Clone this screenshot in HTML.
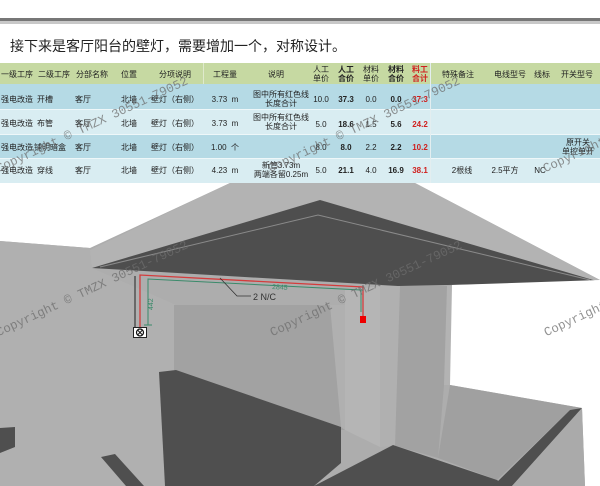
<!DOCTYPE html>
<html><head><meta charset="utf-8"><style>
*{margin:0;padding:0;box-sizing:border-box}
body{width:600px;height:486px;overflow:hidden;background:#fff;position:relative;font-family:"Liberation Sans","Noto Sans CJK SC",sans-serif}
.t{position:absolute;font-size:8px;color:#222;text-align:center;white-space:nowrap;line-height:9px;transform:translateX(-50%)}
.b{font-weight:bold}
.r{color:#d0201e;font-weight:bold}
.wm{position:absolute;font-family:"Liberation Mono",monospace;font-size:12.5px;color:rgba(110,110,110,.75);white-space:nowrap;transform-origin:0 100%;transform:rotate(-25deg)}
</style></head><body>
<div style="position:absolute;left:0;top:18px;width:600px;height:3px;background:#777"></div>
<div style="position:absolute;left:0;top:21px;width:600px;height:3px;background:#c8c8c8"></div>
<div style="position:absolute;left:10px;top:36px;font-size:14px;color:#222;white-space:nowrap">接下来是客厅阳台的壁灯，需要增加一个，对称设计。</div>

<svg style="position:absolute;left:0;top:0" width="600" height="486">
<rect x="0" y="183" width="600" height="303" fill="#adadad"/>
<polygon points="0,183 230,183 90,248 0,241" fill="#fff"/>
<polygon points="415,183 600,183 600,280" fill="#fff"/>
<polygon points="0,241 90,248 92,268 176,305 176,486 0,486" fill="#b0b0b0"/>
<polygon points="90,250 230,183 415,183 600,280 600,284 320,200 92,268" fill="#b3b3b3"/>
<polygon points="92,268 320,200 600,282 398,286" fill="#4e4e4e"/>
<polyline points="100,267 318,215 590,280" fill="none" stroke="#8a8a8a" stroke-width="1"/>
<polygon points="380,286 452,286 444,385 438,458 393,445 345,430 345,290" fill="#a2a2a2"/>
<polygon points="380,286 400,286 395,446 380,447" fill="#b0b0b0"/>
<polygon points="447,286 452,286 450,385 444,385" fill="#b3b3b3"/>
<polygon points="452,285 600,280 600,486 585,486 582,408 450,385" fill="#fff"/>
<polygon points="174,305 345,305 345,430 174,430" fill="#a2a2a2"/>
<polygon points="330,305 345,305 345,430 341,427" fill="#b0b0b0"/>
<polygon points="345,290 380,286 380,447 345,430" fill="#b5b5b5"/>
<polygon points="159,372 176,370 341,427 341,463 314,486 165,486" fill="#4f4f4f"/>
<polygon points="450,385 582,408 570,410 497,480 438,458" fill="#a0a0a0"/>
<polygon points="314,486 393,445 497,480 505,486" fill="#4f4f4f"/>
<polygon points="570,410 582,408 512,486 493,486" fill="#4f4f4f"/>
<polygon points="582,408 585,486 512,486" fill="#aaaaaa"/>
<polygon points="0,428 15,427 15,447 0,453" fill="#4f4f4f"/>
<polygon points="101,457 115,454 144,486 126,486" fill="#4f4f4f"/>
<line x1="135" y1="276" x2="135" y2="327" stroke="#222" stroke-width="1"/>
<polyline points="140,327 140,275 363,287 363,318" fill="none" stroke="#d43c3c" stroke-width="1.3"/>
<polyline points="148,325 148,279 361,290 361,312" fill="none" stroke="#3a8a6a" stroke-width="1"/>
<line x1="144" y1="325" x2="152" y2="325" stroke="#3a8a6a"/>
<rect x="360" y="316" width="6" height="7" fill="#e00"/>
<rect x="133.5" y="327.5" width="13" height="10" fill="#fff" stroke="#222"/>
<circle cx="140" cy="332.5" r="3.5" fill="none" stroke="#111" stroke-width="1.2"/>
<line x1="137.5" y1="330" x2="142.5" y2="335" stroke="#111"/>
<line x1="142.5" y1="330" x2="137.5" y2="335" stroke="#111"/>
<polyline points="220,278 237,296 251,296" fill="none" stroke="#333" stroke-width="0.8"/>
<text x="253" y="300" font-family="Liberation Sans" font-size="9" fill="#333">2 N/C</text>
<text x="272" y="289" font-family="Liberation Sans" font-size="7" fill="#3a8a6a" transform="rotate(3 272 289)">2845</text>
<text x="153" y="310" font-family="Liberation Sans" font-size="7" fill="#3a8a6a" transform="rotate(-90 153 310)">442</text>
</svg>

<div style="position:absolute;left:0;top:63px;width:600px;height:21px;background:#c6d9a2"></div>
<div style="position:absolute;left:0;top:84px;width:600px;height:25px;background:#b5dae5"></div>
<div style="position:absolute;left:0;top:109px;width:600px;height:25px;background:#d9edf2;border-top:1px solid #eef7f9"></div>
<div style="position:absolute;left:0;top:134px;width:600px;height:24px;background:#b5dae5;border-top:1px solid #eef7f9"></div>
<div style="position:absolute;left:0;top:158px;width:600px;height:25px;background:#d9edf2;border-top:1px solid #eef7f9"></div>
<div style="position:absolute;left:203px;top:63px;width:1px;height:21px;background:#dfe9cc"></div>
<div style="position:absolute;left:430px;top:63px;width:1px;height:120px;background:#e3eef0"></div>

<div class="t" style="left:17px;top:70px">一级工序</div><div class="t" style="left:54px;top:70px">二级工序</div><div class="t" style="left:92px;top:70px">分部名称</div><div class="t" style="left:129px;top:70px">位置</div><div class="t" style="left:175px;top:70px">分项说明</div><div class="t" style="left:225px;top:70px">工程量</div><div class="t" style="left:276px;top:70px">说明</div>
<div class="t" style="left:321px;top:65px">人工<br>单价</div><div class="t b" style="left:346px;top:65px">人工<br>合价</div><div class="t" style="left:371px;top:65px">材料<br>单价</div><div class="t b" style="left:396px;top:65px">材料<br>合价</div><div class="t r" style="left:420px;top:65px">料工<br>合计</div>
<div class="t" style="left:458px;top:70px">特殊备注</div><div class="t" style="left:510px;top:70px">电线型号</div><div class="t" style="left:542px;top:70px">线标</div><div class="t" style="left:577px;top:70px">开关型号</div>

<div class="t" style="left:17px;top:95px">强电改造</div><div class="t" style="left:45px;top:95px">开槽</div><div class="t" style="left:83px;top:95px">客厅</div><div class="t" style="left:129px;top:95px">北墙</div><div class="t" style="left:175px;top:95px">壁灯（右侧）</div><div class="t" style="left:225px;top:95px">3.73 &nbsp;m</div><div class="t" style="left:281px;top:90px">图中所有红色线<br>长度合计</div><div class="t" style="left:321px;top:95px">10.0</div><div class="t b" style="left:346px;top:95px">37.3</div><div class="t" style="left:371px;top:95px">0.0</div><div class="t b" style="left:396px;top:95px">0.0</div><div class="t r" style="left:420px;top:95px">37.3</div>

<div class="t" style="left:17px;top:119px">强电改造</div><div class="t" style="left:45px;top:119px">布管</div><div class="t" style="left:83px;top:119px">客厅</div><div class="t" style="left:129px;top:119px">北墙</div><div class="t" style="left:175px;top:119px">壁灯（右侧）</div><div class="t" style="left:225px;top:119px">3.73 &nbsp;m</div><div class="t" style="left:281px;top:113px">图中所有红色线<br>长度合计</div><div class="t" style="left:321px;top:120px">5.0</div><div class="t b" style="left:346px;top:120px">18.6</div><div class="t" style="left:371px;top:120px">1.5</div><div class="t b" style="left:396px;top:120px">5.6</div><div class="t r" style="left:420px;top:120px">24.2</div>

<div class="t" style="left:17px;top:143px">强电改造</div><div class="t" style="left:50px;top:143px">铺明暗盒</div><div class="t" style="left:83px;top:143px">客厅</div><div class="t" style="left:129px;top:143px">北墙</div><div class="t" style="left:175px;top:143px">壁灯（右侧）</div><div class="t" style="left:225px;top:143px">1.00 &nbsp;个</div><div class="t" style="left:321px;top:143px">8.0</div><div class="t b" style="left:346px;top:143px">8.0</div><div class="t" style="left:371px;top:143px">2.2</div><div class="t b" style="left:396px;top:143px">2.2</div><div class="t r" style="left:420px;top:143px">10.2</div><div class="t" style="left:578px;top:138px">原开关<br>单控单开</div>

<div class="t" style="left:17px;top:166px">强电改造</div><div class="t" style="left:45px;top:166px">穿线</div><div class="t" style="left:83px;top:166px">客厅</div><div class="t" style="left:129px;top:166px">北墙</div><div class="t" style="left:175px;top:166px">壁灯（右侧）</div><div class="t" style="left:225px;top:166px">4.23 &nbsp;m</div><div class="t" style="left:281px;top:161px">新管3.73m<br>两端各留0.25m</div><div class="t" style="left:321px;top:166px">5.0</div><div class="t b" style="left:346px;top:166px">21.1</div><div class="t" style="left:371px;top:166px">4.0</div><div class="t b" style="left:396px;top:166px">16.9</div><div class="t r" style="left:420px;top:166px">38.1</div><div class="t" style="left:462px;top:166px">2根线</div><div class="t" style="left:505px;top:166px">2.5平方</div><div class="t" style="left:540px;top:166px">NC</div>

<div class="wm" style="left:0;top:162px">Copyright © TMZX 30551-79052</div>
<div class="wm" style="left:272px;top:162px">Copyright © TMZX 30551-79052</div>
<div class="wm" style="left:547px;top:162px">Copyright © TMZX 30551-79052</div>
<div class="wm" style="left:0;top:326px">Copyright © TMZX 30551-79052</div>
<div class="wm" style="left:274px;top:326px">Copyright © TMZX 30551-79052</div>
<div class="wm" style="left:548px;top:326px">Copyright © TMZX 30551-79052</div>
</body></html>
